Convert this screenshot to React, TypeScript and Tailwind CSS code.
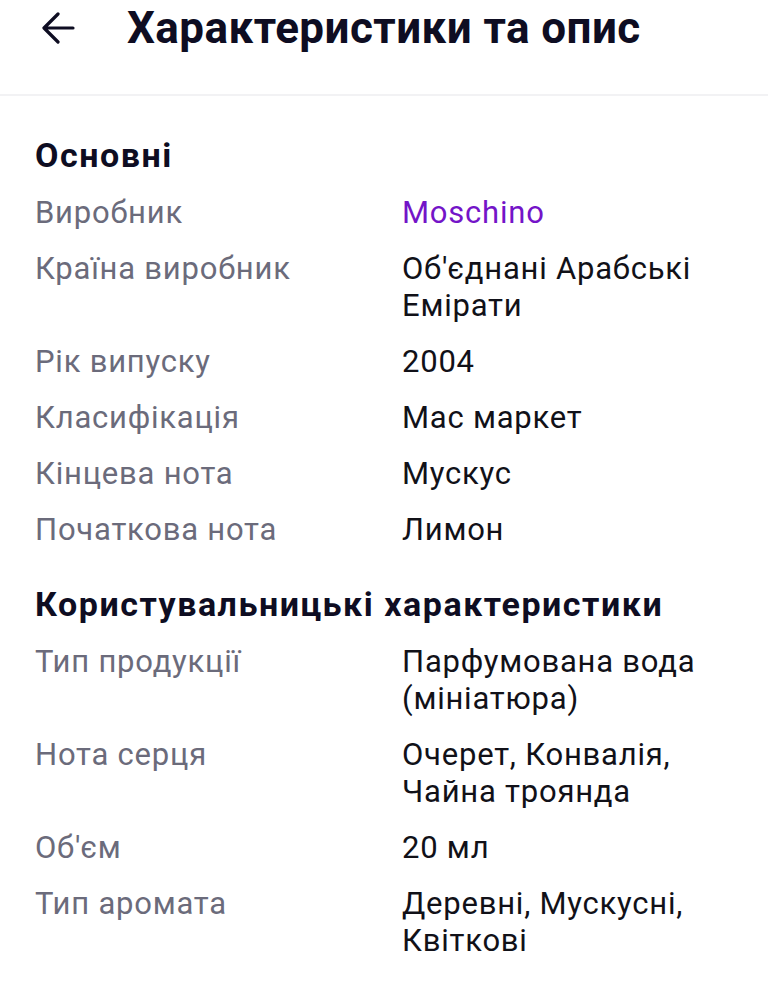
import React from "react";

type Row = { label: string; value: string; link?: boolean };

const sections: { title: string; rows: Row[] }[] = [
  {
    title: "Основні",
    rows: [
      { label: "Виробник", value: "Moschino", link: true },
      { label: "Країна виробник", value: "Об'єднані Арабські Емірати" },
      { label: "Рік випуску", value: "2004" },
      { label: "Класифікація", value: "Мас маркет" },
      { label: "Кінцева нота", value: "Мускус" },
      { label: "Початкова нота", value: "Лимон" },
    ],
  },
  {
    title: "Користувальницькі характеристики",
    rows: [
      { label: "Тип продукції", value: "Парфумована вода (мініатюра)" },
      { label: "Нота серця", value: "Очерет, Конвалія, Чайна троянда" },
      { label: "Об'єм", value: "20 мл" },
      { label: "Тип аромата", value: "Деревні, Мускусні, Квіткові" },
    ],
  },
];

export default function App() {
  return (
    <div className="min-h-[1000px] w-[768px] bg-white font-['Roboto','Liberation_Sans',sans-serif]">
      {/* Top bar */}
      <header className="flex h-[96px] items-start gap-[52px] border-b-2 border-[#f2f2f4] px-[42px] pt-[3px]">
        <svg width="33" height="50" viewBox="0 0 33 50" fill="none" stroke="#0e0d22" strokeWidth="3.2" strokeLinecap="round" strokeLinejoin="round">
          <path d="M31 25H3M16 11L2 25l14 14" />
        </svg>
        <h1 className="text-[44px] font-bold leading-[50px] tracking-[0.01em] text-[#0e0d22]">Характеристики та опис</h1>
      </header>

      <main className="flex flex-col gap-[36px] px-[35px] pt-[39px]">
        {sections.map((s) => (
          <section key={s.title} className="flex flex-col gap-[19px]">
            <h2 className="text-[34px] font-bold leading-[40px] tracking-[0.045em] text-[#0e0d22]">{s.title}</h2>
            <div className="grid grid-cols-[367px_1fr] gap-y-[19px] text-[31px] leading-[37px] tracking-[0.025em]">
              {s.rows.map((r) => (
                <React.Fragment key={r.label}>
                  <span className="text-[#6b6b7b]">{r.label}</span>
                  <span className={`pr-[20px] ${r.link ? "text-[#7414c8]" : "text-[#111118]"}`}>{r.value}</span>
                </React.Fragment>
              ))}
            </div>
          </section>
        ))}
      </main>
    </div>
  );
}
